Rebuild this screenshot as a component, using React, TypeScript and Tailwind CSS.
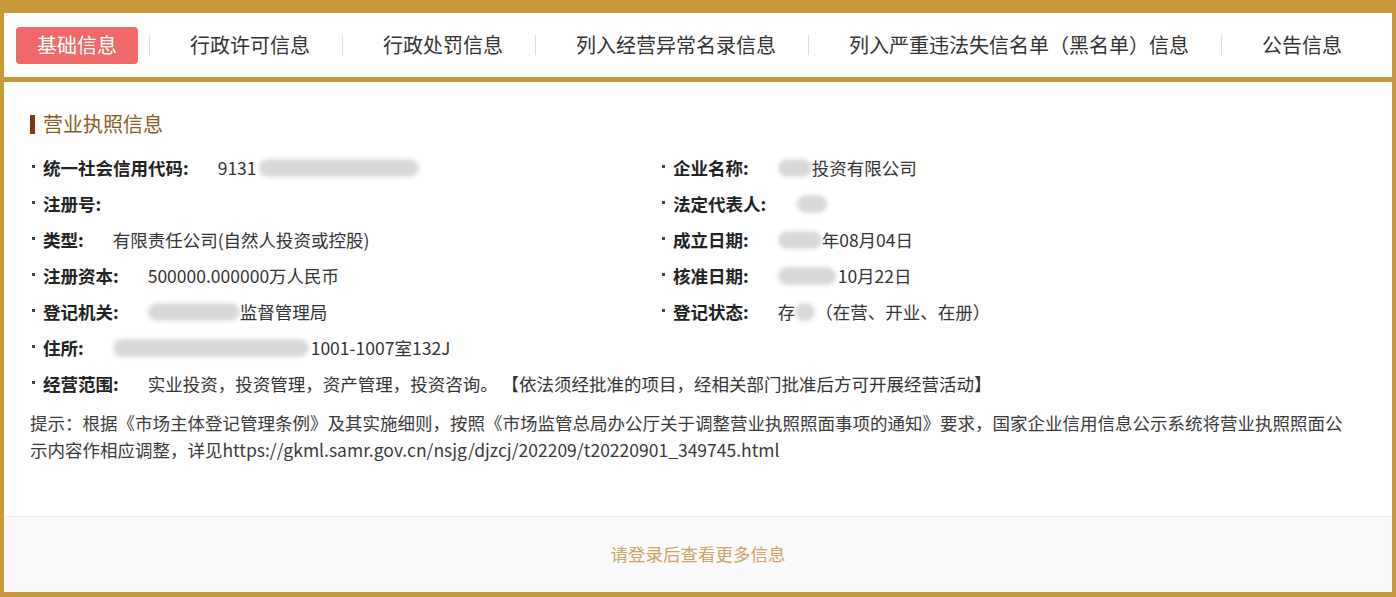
const tabs = ["基础信息", "行政许可信息", "行政处罚信息", "列入经营异常名录信息", "列入严重违法失信名单（黑名单）信息", "公告信息"]

// Redacted part of a value, drawn as a soft grey smear
function Blur({ className }: { className: string }) {
    return <span className={`inline-block h-[18px] rounded-full bg-[#cfcfcf] blur-[2px] opacity-80 align-middle ${className}`} />
}

function Field({ label, children }: { label: string; children?: React.ReactNode }) {
    return (
        <div className="flex items-center h-[36px] whitespace-nowrap">
            <span className="w-[3px] h-[3px] bg-[#444] ml-[2px] mr-[8px] -translate-y-[2px]" />
            <span className="font-bold text-[#222] mr-[29px]">{label}:</span>
            <span className="flex items-center text-[#333]">{children}</span>
        </div>
    )
}

export default function App() {
    return (
        <div className="h-[597px] bg-[#c8993b] pt-[13px] px-[4px] pb-[5px] flex flex-col font-['Noto_Sans_CJK_SC','Microsoft_YaHei',sans-serif]">
            {/* tab bar */}
            <div className="h-[64px] bg-white flex items-center pl-[12px] text-[20px] text-[#333]">
                {tabs.map((t, i) => (
                    <div key={t} className="flex items-center">
                        {i > 0 && <span className="w-px h-[20px] bg-[#ddd] ml-[11px] mr-[19px]" />}
                        <div
                            className={`h-[37px] px-[21px] flex items-center rounded-[4px] ${
                                i === 0 ? "bg-[#f16a6a] text-white" : ""
                            }`}
                        >
                            {t}
                        </div>
                    </div>
                ))}
            </div>

            <div className="mt-[5px] flex-1 bg-white flex flex-col">
                <div className="h-[434px] pt-[28px] pl-[26px] pr-[40px] text-[17.5px]">
                    <div className="flex items-center h-[28px] mb-[12px]">
                        <span className="w-[5px] h-[19px] bg-[#7b3b0c] mr-[8px]" />
                        <span className="text-[20px] text-[#8a5c24]">营业执照信息</span>
                    </div>

                    <div className="grid grid-cols-[630px_1fr]">
                        <Field label="统一社会信用代码">
                            9131
                            <Blur className="w-[160px] ml-[2px]" />
                        </Field>
                        <Field label="企业名称">
                            <Blur className="w-[34px]" />
                            投资有限公司
                        </Field>
                        <Field label="注册号" />
                        <Field label="法定代表人">
                            <Blur className="w-[30px] ml-[2px]" />
                        </Field>
                        <Field label="类型">有限责任公司(自然人投资或控股)</Field>
                        <Field label="成立日期">
                            <Blur className="w-[44px]" />
                            年08月04日
                        </Field>
                        <Field label="注册资本">500000.000000万人民币</Field>
                        <Field label="核准日期">
                            <Blur className="w-[58px] mr-[2px]" />
                            10月22日
                        </Field>
                        <Field label="登记机关">
                            <Blur className="w-[92px]" />
                            监督管理局
                        </Field>
                        <Field label="登记状态">
                            存
                            <Blur className="w-[20px]" />
                            （在营、开业、在册）
                        </Field>
                        <Field label="住所">
                            <Blur className="w-[196px] mr-[2px]" />
                            1001-1007室132J
                        </Field>
                        <div />
                    </div>
                    <Field label="经营范围">
                        实业投资，投资管理，资产管理，投资咨询。&nbsp;【依法须经批准的项目，经相关部门批准后方可开展经营活动】
                    </Field>

                    <p className="mt-[7px] leading-[27px] text-[#3a3a3a]">
                        提示：根据《市场主体登记管理条例》及其实施细则，按照《市场监管总局办公厅关于调整营业执照照面事项的通知》要求，国家企业信用信息公示系统将营业执照照面公示内容作相应调整，详见https://gkml.samr.gov.cn/nsjg/djzcj/202209/t20220901_349745.html
                    </p>
                </div>

                <div className="flex-1 border-t border-[#eeeeee] bg-[#fafafc] flex items-center justify-center text-[17.5px] text-[#c9a762]">
                    请登录后查看更多信息
                </div>
            </div>
        </div>
    )
}
